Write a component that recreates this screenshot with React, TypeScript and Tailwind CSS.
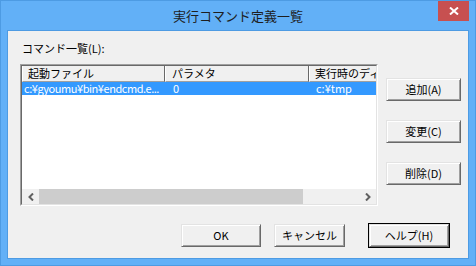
import React from 'react';

const font = "font-['Noto_Sans_CJK_JP','Liberation_Sans',sans-serif]";

function Btn({ label, w, isDefault }: { label: string; w: string; isDefault?: boolean }) {
  const inner = (
    <div
      className={`h-full w-full flex items-center justify-center bg-[#f0f0f0] border border-t-[#e3e3e3] border-l-[#e3e3e3] border-r-[#696969] border-b-[#696969] shadow-[inset_1px_1px_0_#ffffff,inset_-1px_-1px_0_#a0a0a0] text-[11px] leading-[13px] text-black`}
    >
      {label}
    </div>
  );
  if (isDefault) {
    return <div className={`${w} h-[25px] -mt-[1px] border border-black`}>{inner}</div>;
  }
  return <div className={`${w} h-[23px]`}>{inner}</div>;
}

function Chevron({ dir }: { dir: 'left' | 'right' }) {
  return (
    <svg width="6" height="8" viewBox="0 0 6 8">
      <path
        d={dir === 'left' ? 'M5 0.5 L1.5 4 L5 7.5' : 'M1 0.5 L4.5 4 L1 7.5'}
        fill="none"
        stroke="#606060"
        strokeWidth="2"
      />
    </svg>
  );
}

const headerCell =
  'h-full bg-[#f0f0f0] border-l border-l-white border-r border-r-[#696969] border-b border-b-[#a0a0a0] pl-[5px] whitespace-nowrap overflow-hidden text-[11px] leading-[15px] text-black';

export default function App() {
  return (
    <div className={`w-[476px] h-[266px] bg-[#62b0f7] border border-[#4d9be3] flex flex-col ${font}`}>
      {/* title bar */}
      <div className="relative h-[29px] flex items-center justify-center">
        <span className="text-[13px] leading-[16px] text-[#1e1e1e] mt-[1px]">実行コマンド定義一覧</span>
        <div className="absolute top-0 right-[6px] w-[31px] h-[20px] bg-[#c75050] flex items-center justify-center">
          <svg width="10" height="8" viewBox="0 0 10 8">
            <path d="M1 0.5 L9 7.5 M9 0.5 L1 7.5" stroke="white" strokeWidth="2" />
          </svg>
        </div>
      </div>

      {/* client */}
      <div className="mx-[6px] h-[229px] border border-[#4d9be3] bg-[#f0f0f0] flex flex-col">
        <div className="flex">
          <div className="pl-[12px] flex flex-col">
            <div className="ml-[2px] mt-[10px] h-[15px] text-[11px] leading-[15px] text-black">コマンド一覧(L):</div>
            <div className="mt-[8px] w-[358px] h-[142px] border border-t-[#a0a0a0] border-l-[#a0a0a0] border-r-white border-b-white">
              <div className="w-full h-full border border-t-[#696969] border-l-[#696969] border-r-[#e3e3e3] border-b-[#e3e3e3] flex flex-col bg-white">
                <div className="h-[16px] flex">
                  <div className={`${headerCell} w-[143px] shrink-0`}>起動ファイル</div>
                  <div className={`${headerCell} w-[144px] shrink-0 !pl-[6px]`}>パラメタ</div>
                  <div className={`${headerCell} flex-1 !border-r-0`}>実行時のディレクトリ</div>
                </div>
                <div className="h-[13px] flex bg-[#3399ff] text-white text-[11px] leading-[13px]">
                  <div className="w-[143px] shrink-0 pl-[2px] whitespace-nowrap tracking-[-0.45px]">c:¥gyoumu¥bin¥endcmd.e...</div>
                  <div className="w-[144px] shrink-0 pl-[8px]">0</div>
                  <div className="flex-1 pl-[7px] whitespace-nowrap">c:¥tmp</div>
                </div>
                <div className="flex-1" />
                <div className="h-[15px] flex bg-[#f0f0f0]">
                  <div className="w-[17px] flex items-center justify-center">
                    <Chevron dir="left" />
                  </div>
                  <div className="w-[264px] bg-[#cdcdcd]" />
                  <div className="flex-1" />
                  <div className="w-[17px] flex items-center justify-center">
                    <Chevron dir="right" />
                  </div>
                </div>
              </div>
            </div>
          </div>
          <div className="ml-[8px] pt-[47px] flex flex-col gap-[19px]">
            <Btn label="追加(A)" w="w-[75px]" />
            <Btn label="変更(C)" w="w-[75px]" />
            <Btn label="削除(D)" w="w-[75px]" />
          </div>
        </div>

        <div className="mt-[18px] pl-[173px] flex items-start">
          <Btn label="OK" w="w-[80px]" />
          <div className="w-[13px]" />
          <Btn label="キャンセル" w="w-[71px]" />
          <div className="w-[23px]" />
          <Btn label="ヘルプ(H)" w="w-[82px]" isDefault />
        </div>
      </div>
    </div>
  );
}
